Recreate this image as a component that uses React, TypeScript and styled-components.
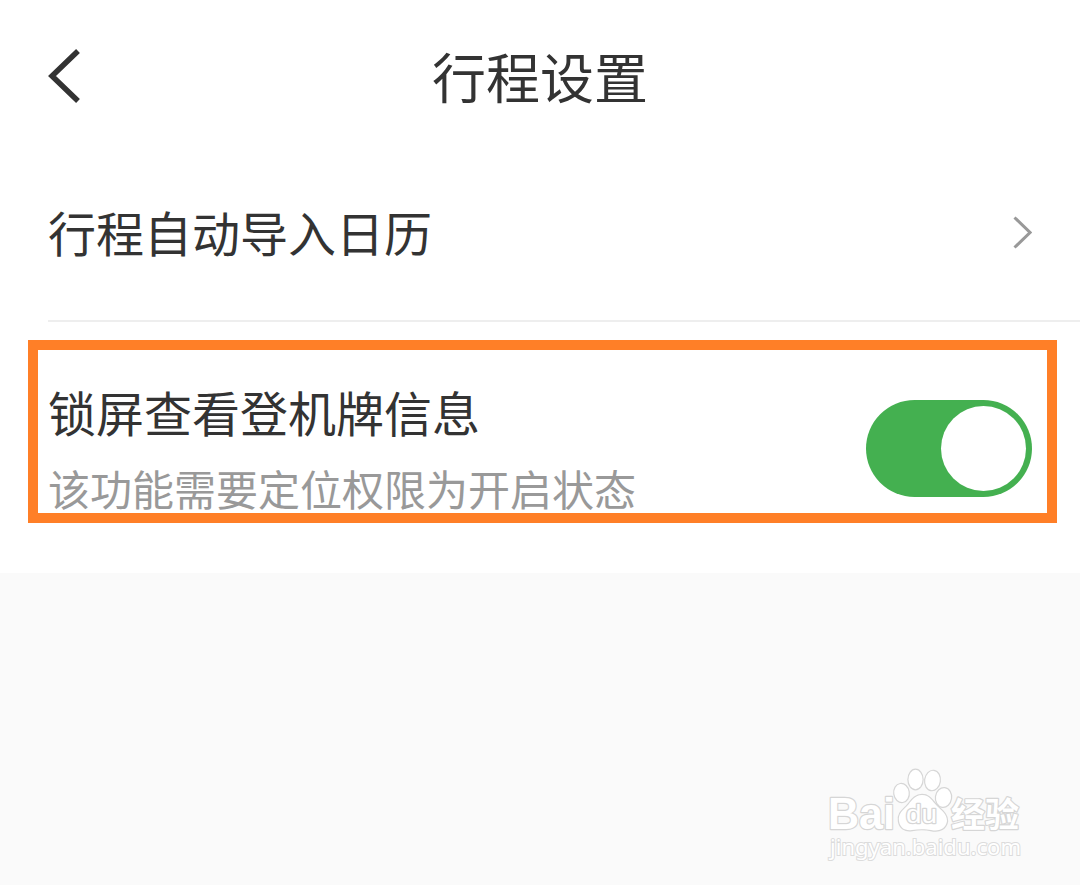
import { useState } from "react";
import styled, { createGlobalStyle } from "styled-components";

const GlobalStyle = createGlobalStyle`
  * {
    box-sizing: border-box;
  }
  body {
    margin: 0;
    background-color: #fafafa;
    font-family: "Noto Sans CJK SC", "Noto Sans", sans-serif;
    color: #333333;
  }
`;

const Wrapper = styled.div`
  position: relative;
  width: 100%;
  height: 885px;
  background-color: #fafafa;
  overflow: hidden;
`;

const Header = styled.header`
  display: grid;
  grid-template-columns: 120px 1fr 120px;
  align-items: center;
  height: 152px;
  background-color: white;
`;

const BackButton = styled.button`
  display: flex;
  padding: 0 0 0 48px;
  border: none;
  background: none;
  color: #333333;
`;

const Title = styled.h1`
  margin: 0;
  font-size: 54px;
  font-weight: 400;
  line-height: 80px;
  text-align: center;
`;

const List = styled.div`
  background-color: white;
`;

const Row = styled.div<{ $height: number }>`
  position: relative;
  display: flex;
  justify-content: space-between;
  align-items: center;
  height: ${(props) => props.$height}px;
  padding: 0 48px;
`;

const LinkRow = styled(Row)`
  padding-bottom: 7px;
`;

const Divider = styled.div`
  height: 2px;
  margin-left: 48px;
  background-color: #eeeeee;
`;

const Label = styled.div`
  padding-bottom: 4px;
  font-size: 48px;
  line-height: 70px;
`;

const Hint = styled.div`
  margin-top: 6px;
  font-size: 42px;
  line-height: 64px;
  color: #999999;
`;

const Switch = styled.button<{ $on: boolean }>`
  display: flex;
  justify-content: ${(props) => (props.$on ? "flex-end" : "flex-start")};
  align-items: center;
  width: 166px;
  height: 97px;
  margin-top: 2px;
  padding: 0 6px;
  border: none;
  border-radius: 49px;
  background-color: ${(props) => (props.$on ? "#44b050" : "#dddddd")};
`;

const Knob = styled.span`
  width: 85px;
  height: 85px;
  border-radius: 50%;
  background-color: white;
`;

// orange frame drawn over the row
const Highlight = styled.div`
  position: absolute;
  top: 18px;
  left: 28px;
  right: 23px;
  height: 183px;
  border: 10px solid #ff7f27;
  pointer-events: none;
`;

const Watermark = styled.svg`
  position: absolute;
  right: 50px;
  bottom: 15px;
`;

function Logo() {
  return (
    <Watermark width="210" height="110" viewBox="820 760 210 110">
      <g
        fill="white"
        stroke="#d6d6d6"
        strokeWidth="2.4"
        strokeLinejoin="round"
        paintOrder="stroke"
      >
        <text
          x="828"
          y="829"
          fontFamily="Liberation Sans"
          fontWeight="700"
          fontSize="44"
          textLength="67"
          lengthAdjust="spacingAndGlyphs"
        >
          Bai
        </text>
        <ellipse cx="901.5" cy="793" rx="7.2" ry="9" transform="rotate(-8 901.5 793)" />
        <ellipse cx="915.5" cy="779.5" rx="7" ry="9.7" />
        <ellipse cx="932.5" cy="780.5" rx="7.3" ry="9.7" transform="rotate(8 932.5 780.5)" />
        <ellipse cx="943.5" cy="797.5" rx="7.5" ry="9.3" transform="rotate(8 943.5 797.5)" />
        <path d="M922 795C914 795 911 802 907 806C902 811 898 814 899 821C900 828 905 831 912 830C918 829 926 829 931 830C940 832 946 828 947 821C947 814 942 811 937 806C932 801 930 795 922 795Z" />
        <text
          x="906"
          y="823"
          fontFamily="Liberation Sans"
          fontSize="25"
          textLength="31"
          lengthAdjust="spacingAndGlyphs"
        >
          du
        </text>
        <text
          x="951"
          y="827"
          fontFamily="Noto Sans CJK SC"
          fontWeight="700"
          fontSize="34"
          textLength="68"
          lengthAdjust="spacingAndGlyphs"
        >
          经验
        </text>
      </g>
      <text
        x="830"
        y="855"
        fill="white"
        stroke="#dcdcdc"
        strokeWidth="2"
        paintOrder="stroke"
        fontFamily="Noto Sans"
        fontSize="22"
        textLength="191"
        lengthAdjust="spacingAndGlyphs"
      >
        jingyan.baidu.com
      </text>
    </Watermark>
  );
}

function App() {
  const [on, setOn] = useState(true);
  return (
    <>
      <GlobalStyle />
      <Wrapper>
        <Header>
          <BackButton>
            <svg width="34" height="56" viewBox="0 0 34 56" fill="none">
              <path d="M30 3L4 28L30 53" stroke="currentColor" strokeWidth="5.5" />
            </svg>
          </BackButton>
          <Title>行程设置</Title>
        </Header>
        <List>
          <LinkRow $height={168}>
            <Label>行程自动导入日历</Label>
            <svg width="20" height="34" viewBox="0 0 20 34" fill="none">
              <path d="M2.5 1.5L18 16.5L2.5 31.5" stroke="#999999" strokeWidth="3" />
            </svg>
          </LinkRow>
          <Divider />
          <Row $height={251}>
            <div>
              <Label>锁屏查看登机牌信息</Label>
              <Hint>该功能需要定位权限为开启状态</Hint>
            </div>
            <Switch $on={on} onClick={() => setOn(!on)}>
              <Knob />
            </Switch>
            <Highlight />
          </Row>
        </List>
        <Logo />
      </Wrapper>
    </>
  );
}

export default App;
